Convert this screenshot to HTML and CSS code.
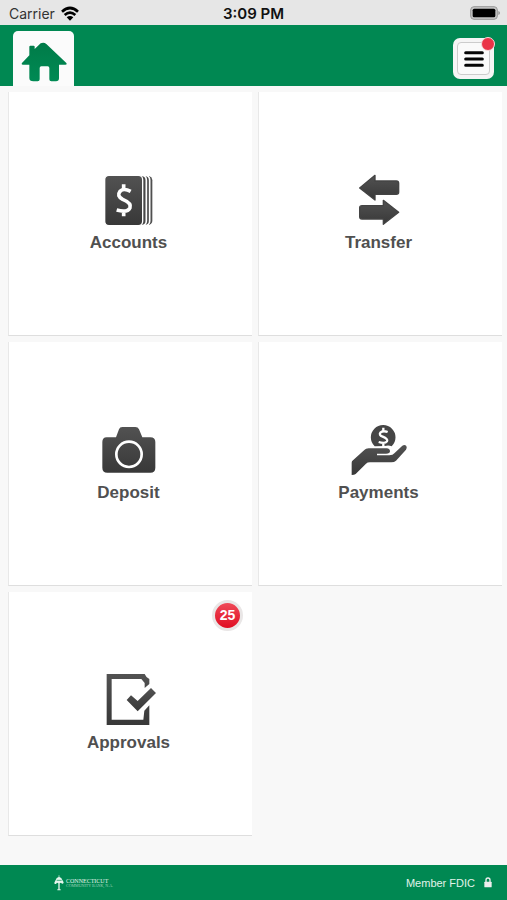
FILE: index.html
```html
<!DOCTYPE html>
<html lang="en">
<head>
<meta charset="utf-8">
<meta name="viewport" content="width=device-width, initial-scale=1">
<title>Home</title>
<link rel="stylesheet" href="styles.css">
</head>
<body>
<svg class="defs" width="0" height="0" aria-hidden="true">
  <defs>
    <linearGradient id="ink" x1="0" y1="0" x2="0" y2="1"><stop offset="0" stop-color="#525252"/><stop offset="1" stop-color="#383838"/></linearGradient>
    <linearGradient id="leaf" x1="0" y1="0" x2="0" y2="1"><stop offset="0" stop-color="#007b48"/><stop offset="1" stop-color="#008a54"/></linearGradient>
  </defs>
</svg>
<div class="status">
  <div class="carrier">Carrier
    <svg width="20" height="16" viewBox="0 0 60 48" aria-hidden="true">
      <path d="M6 17Q30 -5 54 17" fill="none" stroke="#000" stroke-width="8"/>
      <path d="M14 27Q30 13 46 27" fill="none" stroke="#000" stroke-width="8"/>
      <path d="M20 34Q30 26 40 34L30 44Z"/>
    </svg>
  </div>
  <div class="clock">3:09 PM</div>
  <div class="battery">
    <svg width="32" height="15" viewBox="0 0 96 45" aria-hidden="true">
      <rect x="5" y="2" width="80" height="38" rx="10" fill="#c4c4c4" stroke="#999" stroke-width="3"/>
      <rect x="11" y="8" width="68" height="26" rx="5"/>
      <path d="M88 15q5 1 5 6t-5 6z" fill="#999"/>
    </svg>
  </div>
</div>
<header class="topbar">
  <a class="home" href="#" aria-label="Home">
    <svg width="46" height="40" viewBox="0 0 138 120" aria-hidden="true">
      <path fill="url(#leaf)" d="M25 14q0-3 3-3h10q3 0 3 3v7L59 4q9-5 17 2l60 57q3 5-3 5h-19v41q0 9-9 9H91q-6 0-6-6V78q0-5-5-5H61q-5 0-5 5v34q0 6-6 6H37q-12 0-12-10V68H6q-6 0-3-5l22-23z"/>
    </svg>
  </a>
  <button class="menu" type="button" aria-label="Menu">
    <span class="menu-face">
      <svg width="20" height="18" viewBox="0 0 60 54" aria-hidden="true"><path d="M5 8H55M5 27H55M5 46H55" stroke="#050505" stroke-width="9" stroke-linecap="round"/></svg>
    </span>
    <span class="dot"></span>
  </button>
</header>
<main class="tiles">
  <a class="tile" href="#">
    <svg class="icon" viewBox="57 15 180 168" aria-hidden="true">
      <rect x="106" y="33" width="111" height="147" rx="13" fill="#505050"/>
      <rect x="95" y="31" width="114" height="151" rx="14" fill="#484848" stroke="#fff" stroke-width="5"/>
      <rect x="85" y="31" width="114" height="151" rx="14" fill="#484848" stroke="#fff" stroke-width="5"/>
      <rect x="74" y="31" width="114" height="151" rx="13" fill="url(#ink)" stroke="#fff" stroke-width="4"/>
      <path d="M152 79Q131 68 120 79Q109 93 128 103Q155 114 150 128Q143 144 110 135M131 58V77M131 136V154" fill="none" stroke="#fff" stroke-width="11"/>
    </svg>
    <span class="label">Accounts</span>
  </a>
  <a class="tile" href="#">
    <svg class="icon" viewBox="57 15 180 168" aria-hidden="true">
      <path fill="url(#ink)" stroke="#444" stroke-width="4" stroke-linejoin="round" d="M89 69L135 31V48H199Q206 48 206 55V82Q206 88 199 88H135V105Z"/>
      <path fill="url(#ink)" stroke="#444" stroke-width="4" stroke-linejoin="round" d="M206 142L160 178V162H96Q89 162 89 155V128Q89 122 96 122H160V106Z"/>
    </svg>
    <span class="label">Transfer</span>
  </a>
  <a class="tile" href="#">
    <svg class="icon" viewBox="57 15 180 168" aria-hidden="true">
      <path fill="url(#ink)" d="M80 67H108L117 43Q119 36 127 36H166Q174 36 177 43L187 67H211Q226 67 226 81V158Q226 173 211 173H82Q67 173 67 158V81Q67 67 80 67Z"/>
      <circle cx="147" cy="118" r="38" fill="none" stroke="#fff" stroke-width="8"/>
    </svg>
    <span class="label">Deposit</span>
  </a>
  <a class="tile" href="#">
    <svg class="icon" viewBox="57 15 180 168" aria-hidden="true">
      <path fill="#454545" d="M134 94A37 37 0 1 1 185 94Q176 89 164 93Z"/>
      <path d="M173 51Q160 46 152 52Q145 60 158 65Q175 72 171 79Q165 87 146 81M160 38V51M160 83V96" fill="none" stroke="#fff" stroke-width="7"/>
      <path fill="url(#ink)" d="M65 180V143Q65 139 69 136L103 105Q107 100 116 100H170Q180 101 180 109Q180 116 168 116H141V121H178Q189 121 193 115L217 92Q224 87 229 93Q232 98 228 104L198 137Q193 142 184 142H120Q112 142 108 146L77 177Q73 180 65 180Z"/>
    </svg>
    <span class="label">Payments</span>
  </a>
  <a class="tile" href="#">
    <svg class="icon" viewBox="57 15 180 168" aria-hidden="true">
      <path fill="url(#ink)" fill-rule="evenodd" d="M80 27H194Q199 39 208 42V57L194 69V54L184 42H95V164H190L193 137L208 121V180H80Z"/>
      <path fill="url(#ink)" d="M140 105L153 91L173 108L213 69L228 84L173 139Z"/>
    </svg>
    <span class="label">Approvals</span>
    <span class="badge">25</span>
  </a>
</main>
<footer class="footer">
  <div class="brand">
    <svg width="10" height="16" viewBox="0 0 30 48" aria-hidden="true">
      <path fill="#e6f5ed" d="M14 1h2v5q7 1 9 9l4 7q0 5-5 4l-3-3-4 2v18h3v3H10v-3h3V25l-4-2-3 4q-6 1-5-4l4-8q2-8 9-9z"/>
      <path d="M8 16H23" stroke="#008852" stroke-width="2"/>
    </svg>
    <div class="brand-text"><span class="brand-name">CONNECTICUT</span><span class="brand-sub">COMMUNITY BANK, N.A.</span></div>
  </div>
  <div class="fdic">Member FDIC
    <svg width="8" height="11" viewBox="0 0 24 33" aria-hidden="true"><path d="M6 15V9q0-6 6-6t6 6v6" fill="none" stroke="#eee" stroke-width="4"/><rect x="1" y="14" width="22" height="17" rx="2" fill="#eee"/></svg>
  </div>
</footer>
</body>
</html>
```
FILE: styles.css
```css
* { box-sizing: border-box; }
body {
  margin: 0;
  min-height: 100vh;
  display: flex;
  flex-direction: column;
  background: #f8f8f8;
  font-family: "Liberation Sans", Arial, sans-serif;
}
svg { display: block; flex: none; }
a { color: inherit; text-decoration: none; }
.defs { position: absolute; }
.status {
  display: grid;
  grid-template-columns: 1fr auto 1fr;
  align-items: center;
  height: 25px;
  padding: 2px 6px 0 6px;
  background: #e6e6e6;
  color: #111;
  font: 14px/20px Inter, sans-serif;
}
.carrier { display: flex; align-items: center; gap: 5px; padding-left: 3px; color: #333; }
.clock { font-size: 15px; font-weight: 600; }
.battery { display: flex; justify-content: flex-end; }
.topbar {
  display: flex;
  justify-content: space-between;
  align-items: flex-end;
  height: 61px;
  padding: 0 13px;
  background: #008852;
}
.home {
  display: flex;
  justify-content: center;
  align-items: center;
  width: 61px;
  height: 55px;
  padding-top: 6px;
  border-radius: 5px 5px 0 0;
  background: #fbfbfb;
}
.menu {
  position: relative;
  width: 41px;
  height: 41px;
  margin-bottom: 7px;
  padding: 4px;
  border: 0;
  border-radius: 7px;
  background: #f5f5f5;
}
.menu-face {
  display: flex;
  justify-content: center;
  align-items: center;
  height: 100%;
  border: 1px solid #ccc;
  border-radius: 4px;
  background: #fafafa;
}
.dot {
  position: absolute;
  top: -1px;
  right: -1px;
  width: 14px;
  height: 14px;
  border: 1px solid #f3dcdc;
  border-radius: 50%;
  background: #ea3448;
}
.tiles {
  flex: 1;
  display: grid;
  grid-template-columns: 1fr 1fr;
  align-content: start;
  gap: 6px;
  padding: 6px 5px 24px 8px;
}
.tile {
  position: relative;
  display: flex;
  flex-direction: column;
  align-items: center;
  justify-content: center;
  gap: 7px;
  aspect-ratio: 1;
  padding: 0 4px 4px 0;
  border-bottom: 1px solid #dedede;
  border-left: 1px solid #e8e8e8;
  background: #fff;
}
.icon { width: 60px; height: 56px; }
.label { font-size: 17px; line-height: 20px; font-weight: 700; color: #505050; }
.badge {
  position: absolute;
  top: 8px;
  right: 9px;
  width: 31px;
  height: 31px;
  border: 3px solid #e9e6e6;
  border-radius: 50%;
  background: linear-gradient(#ef4a58, #e00d22);
  color: #fff;
  font: 700 14px/25px "Liberation Sans", Arial, sans-serif;
  text-align: center;
}
.footer {
  display: flex;
  justify-content: space-between;
  align-items: center;
  height: 35px;
  padding: 0 15px 0 54px;
  background: #008852;
  color: #e2f3ea;
}
.brand { display: flex; align-items: center; gap: 2px; }
.brand-text { display: flex; flex-direction: column; white-space: nowrap; }
.brand-name { font: 6px/6px "Liberation Serif", serif; }
.brand-sub { font: 4px/4px "Liberation Serif", serif; color: #9fd3bb; }
.fdic { display: flex; align-items: center; gap: 9px; font-size: 11px; line-height: 14px; }
```
